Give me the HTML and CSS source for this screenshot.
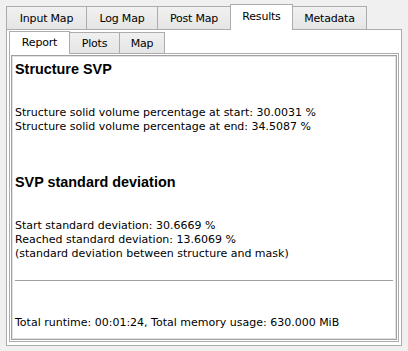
FILE: index.html
```
<!DOCTYPE html>
<html lang="en">
<head>
    <meta charset="UTF-8">
    <title>Results</title>
    <link rel="stylesheet" href="styles.css">
</head>
<body>
    <div class="tabs outer-tabs">
        <div class="tab">Input Map</div>
        <div class="tab">Log Map</div>
        <div class="tab">Post Map</div>
        <div class="tab active">Results</div>
        <div class="tab">Metadata</div>
    </div>
    <div class="pane outer-pane">
        <div class="tabs inner-tabs">
            <div class="tab active">Report</div>
            <div class="tab">Plots</div>
            <div class="tab">Map</div>
        </div>
        <div class="pane inner-pane">
            <div class="report">
                <h2>Structure SVP</h2>
                <p>Structure solid volume percentage at start: 30.0031 %<br>
                Structure solid volume percentage at end: 34.5087 %</p>

                <h2 class="second">SVP standard deviation</h2>
                <p>Start standard deviation: 30.6669 %<br>
                Reached standard deviation: 13.6069 %<br>
                (standard deviation between structure and mask)</p>

                <hr>

                <p class="footer">Total runtime: 00:01:24, Total memory usage: 630.000 MiB</p>
            </div>
        </div>
    </div>
</body>
</html>
```
FILE: styles.css
```
body {
  margin: 0;
  padding: 4px 6px 5px 6px;
  background-color: #f0f0f0;
  font-family: "DejaVu Sans", Tahoma, sans-serif;
  font-size: 11px;
  color: #000;
}

.tabs {
  display: flex;
  align-items: flex-end;
}

.outer-tabs {
  height: 25px;
}

.tab {
  box-sizing: border-box;
  height: 23px;
  display: flex;
  align-items: center;
  justify-content: center;
  border: 1px solid #acacac;
  border-bottom: 0;
  margin-left: -1px;
  background: linear-gradient(#f0f0f0, #e5e5e5);
  letter-spacing: -0.2px;
}

.tab:first-child {
  margin-left: 0;
}

.tab.active {
  height: 26px;
  margin-bottom: -1px;
  background: #fff;
  position: relative;
  z-index: 1;
  padding-bottom: 3px;
}

.outer-tabs .tab:nth-child(1) { width: 81px; }
.outer-tabs .tab:nth-child(2) { width: 72px; }
.outer-tabs .tab:nth-child(3) { width: 74px; }
.outer-tabs .tab:nth-child(4) { width: 63px; }
.outer-tabs .tab:nth-child(5) { width: 75px; }

.pane {
  border: 1px solid #acacac;
  background: #fff;
}

.outer-pane {
  height: 317px;
  box-sizing: border-box;
  padding: 1px 2px 2px 2px;
}

.inner-tabs {
  height: 22px;
}

.inner-tabs .tab {
  height: 21px;
}

.inner-tabs .tab.active {
  height: 23px;
  padding-bottom: 2px;
}

.inner-tabs .tab:nth-child(1) { width: 61px; }
.inner-tabs .tab:nth-child(2) { width: 51px; }
.inner-tabs .tab:nth-child(3) { width: 46px; }

.inner-pane {
  height: 289px;
  box-sizing: border-box;
  padding: 1px;
}

.report {
  height: 100%;
  box-sizing: border-box;
  border: 1px solid #a0a0a0;
  box-shadow: inset 0 0 0 1px #e3e3e3;
  padding: 4px 3px 0 3px;
  line-height: 14px;
}

.report h2 {
  margin: 0;
  font-family: "Liberation Sans", Arial, sans-serif;
  font-size: 14.4px;
  line-height: 18px;
  font-weight: bold;
}

.report p {
  margin: 28px 0 0 0;
}

.report h2.second {
  margin-top: 39px;
}

.report hr {
  margin: 19px 0 0 0;
  border: 0;
  border-top: 1px solid #a0a0a0;
}

.report p.footer {
  margin-top: 35px;
}
```
